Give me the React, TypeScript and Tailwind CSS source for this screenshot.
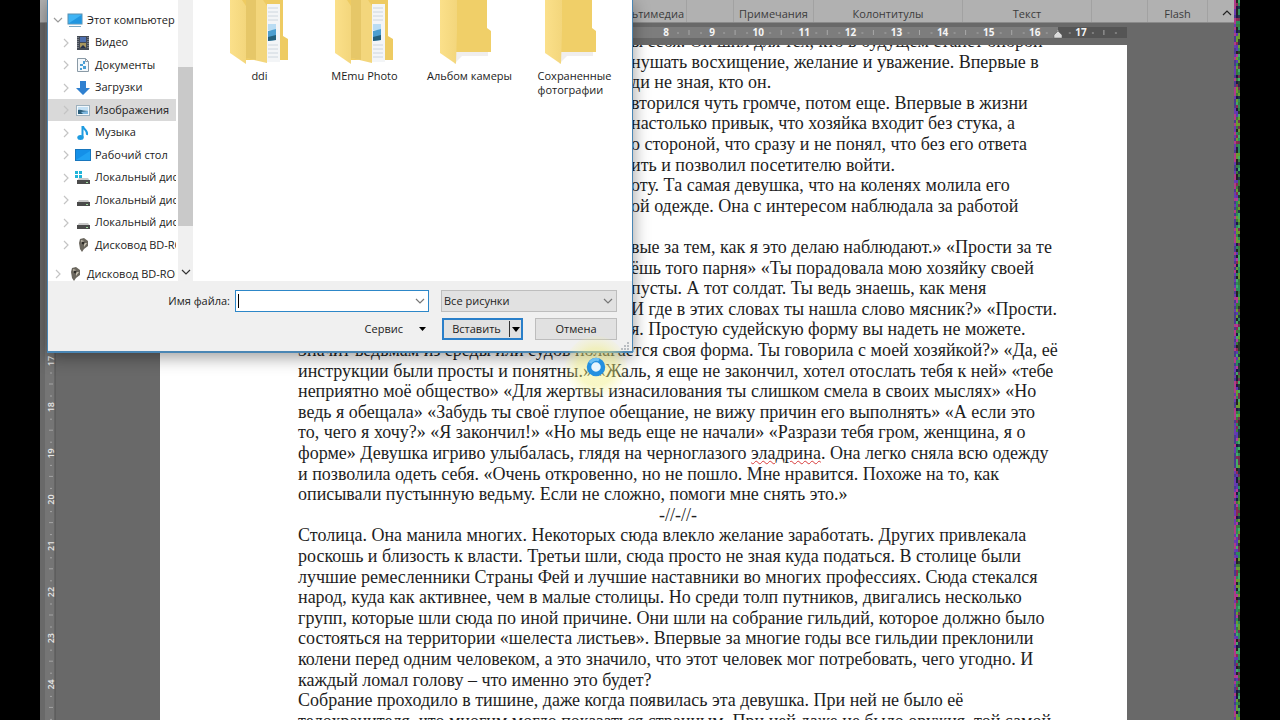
const tails = [
  'ы себя. Он шил для тех, кто в будущем станет опорой',
  'нушать восхищение, желание и уважение. Впервые в',
  'ди не зная, кто он.',
  'вторился чуть громче, потом еще. Впервые в жизни',
  'настолько привык, что хозяйка входит без стука, а',
  'о стороной, что сразу и не понял, что без его ответа',
  'ить и позволил посетителю войти.',
  'оту. Та самая девушка, что на коленях молила его',
  'ой одежде. Она с интересом наблюдала за работой',
  '',
  'вые за тем, как я это делаю наблюдают.» «Прости за те',
  'ёшь того парня» «Ты порадовала мою хозяйку своей',
  'пусты. А тот солдат. Ты ведь знаешь, как меня',
  'И где в этих словах ты нашла слово мясник?» «Прости.',
  'я. Простую судейскую форму вы надеть не можете.',
];

const lines = [
  'Значит ведьмам из среды или судов полагается своя форма. Ты говорила с моей хозяйкой?» «Да, её',
  'инструкции были просты и понятны.» «Жаль, я еще не закончил, хотел отослать тебя к ней» «тебе',
  'неприятно моё общество» «Для жертвы изнасилования ты слишком смела в своих мыслях» «Но',
  'ведь я обещала» «Забудь ты своё глупое обещание, не вижу причин его выполнять» «А если это',
  'то, чего я хочу?» «Я закончил!» «Но мы ведь еще не начали» «Разрази тебя гром, женщина, я о',
  'форме» Девушка игриво улыбалась, глядя на черноглазого *эладрина*. Она легко сняла всю одежду',
  'и позволила одеть себя. «Очень откровенно, но не пошло. Мне нравится. Похоже на то, как',
  'описывали пустынную ведьму. Если не сложно, помоги мне снять это.»',
  '-//-//-',
  'Столица. Она манила многих. Некоторых сюда влекло желание заработать. Других привлекала',
  'роскошь и близость к власти. Третьи шли, сюда просто не зная куда податься. В столице были',
  'лучшие ремесленники Страны Фей и лучшие наставники во многих профессиях. Сюда стекался',
  'народ, куда как активнее, чем в малые столицы. Но среди толп путников, двигались несколько',
  'групп, которые шли сюда по иной причине. Они шли на собрание гильдий, которое должно было',
  'состояться на территории «шелеста листьев». Впервые за многие годы все гильдии преклонили',
  'колени перед одним человеком, а это значило, что этот человек мог потребовать, чего угодно. И',
  'каждый ломал голову – что именно это будет?',
  'Собрание проходило в тишине, даже когда появилась эта девушка. При ней не было её',
  'телохранителя, что многим могло показаться странным. При ней даже не было оружия, той самой',
];

const Chevron = ({ className = '', d = 'M1 1l4 4 4-4' }) => (
  <svg className={`shrink-0 ${className}`} width="10" height="6" viewBox="0 0 10 6" fill="none" stroke="currentColor" strokeWidth="1.2">
    <path d={d} />
  </svg>
);

function TreeIcon({ kind }: { kind: string }) {
  return (
    <svg width="16" height="16" viewBox="0 0 16 16" className="shrink-0">
      {kind === 'pc' && (
        <>
          <rect x="1" y="2" width="14" height="10" fill="#3fb4f4" stroke="#5b8fb0" />
          <path d="M1.500 11.500L14.500 3v8.500z" fill="#2196e0" />
          <path d="M2 14.500h12" stroke="#7ba9c4" />
        </>
      )}
      {kind === 'video' && (
        <>
          <rect x="2" y="1" width="12" height="14" fill="#444a55" />
          <path d="M3 2v12M13 2v12" stroke="#a8adb5" strokeDasharray="1 1" />
          <rect x="5" y="2" width="6" height="5" fill="#4e6fb0" />
          <rect x="5" y="8" width="6" height="5" fill="#a6955e" />
          <path d="M5 13l3-3 3 3z" fill="#26314a" />
        </>
      )}
      {kind === 'docs' && (
        <>
          <path d="M2.500 1.500h8l3 3v10h-11z" fill="#f4f8fb" stroke="#8a9aa6" />
          <path d="M10.500 1.500v3h3" fill="none" stroke="#8a9aa6" />
          <path d="M8 4h2v3H8zM5 7h3v2H5zM8 9h3v3H8zM5 11h2v2H5z" fill="#4a9fd4" />
        </>
      )}
      {kind === 'down' && <path d="M5 1h6v7h4l-7 7-7-7h4z" fill="#2f80d0" />}
      {kind === 'pics' && (
        <>
          <rect x="1.500" y="3.500" width="13" height="10" fill="#f2f8fc" stroke="#9db0bd" />
          <path d="M3 5h10v4H3z" fill="#c3e0f4" />
          <path d="M3 8c3-1 5 1 10 1v3H3z" fill="#2c5f7c" />
          <path d="M6 10l7-1v3H8z" fill="#7fb8df" />
        </>
      )}
      {kind === 'music' && (
        <>
          <ellipse cx="5.500" cy="12.500" rx="3.200" ry="2.500" fill="#1e9be0" />
          <path d="M7.500 1v11.500M8 1c0 4 5 3.500 4 9" fill="none" stroke="#1e9be0" strokeWidth="2" />
        </>
      )}
      {kind === 'desk' && (
        <>
          <rect x="0.500" y="2.500" width="15" height="11" fill="#1490e8" stroke="#1876bd" />
          <path d="M1 13L15 4v9z" fill="#20a2f3" />
        </>
      )}
      {(kind === 'win' || kind === 'disk') && (
        <>
          <path d="M4 8h9l2 3H2z" fill="#c9c9c9" />
          <rect x="2" y="10" width="13" height="4" fill="#4b4b4b" />
          <path d="M11 12.500h2" stroke="#9fdc9f" />
        </>
      )}
      {kind === 'win' && <path d="M0 1h3v3H0zM4 1h3v3H4zM0 5h3v3H0zM4 5h3v3H4z" fill="#20b4d8" />}
      {kind === 'bd' && (
        <>
          <path d="M5 2l4-1 4 3v5l-4 3-2 3-2-3-1-6z" fill="#6b675e" />
          <path d="M6 3l3 1-2 4zM9 6l3 0-3 4z" fill="#c8c2b2" />
          <circle cx="8" cy="6" r="1.500" fill="#2e2c28" />
        </>
      )}
    </svg>
  );
}

const tree = [
  ['video', 'Видео'],
  ['docs', 'Документы'],
  ['down', 'Загрузки'],
  ['pics', 'Изображения'],
  ['music', 'Музыка'],
  ['desk', 'Рабочий стол'],
  ['win', 'Локальный диск'],
  ['disk', 'Локальный диск'],
  ['disk', 'Локальный диск'],
  ['bd', 'Дисковод BD-ROM'],
];

const folders = [
  { name: 'ddi', full: true },
  { name: 'MEmu Photo', full: true },
  { name: 'Альбом камеры', full: false },
  { name: 'Сохраненные\nфотографии', full: false },
];

function Folder({ full }: { full: boolean }) {
  return (
    <svg width="60" height="66" viewBox="0 0 60 66">
      <defs>
        <linearGradient id="flap" x1="0" x2="1">
          <stop offset="0" stopColor="#fbe08a" />
          <stop offset="1" stopColor="#f3d67c" />
        </linearGradient>
      </defs>
      {full ? (
        <>
          <path d="M10 0h43v36l5 3v21H10z" fill="#eecb62" />
          <path d="M37 4h13v58H37z" fill="#f3f5f7" />
          <path d="M38 8h10M38 12h10M38 16h10M38 20h10M38 45h10M38 49h10M38 53h10M38 57h10" stroke="#cdd6de" />
          <path d="M38 24h8v6h-8z" fill="#b9dcf3" />
          <path d="M38 31l8-2v11l-8 1z" fill="#4d9fd0" />
          <path d="M38 37l8-2v5l-8 1z" fill="#24607c" />
          <path d="M16 0h17l4 6v57l-21-5z" fill="#f3d67c" />
          <path d="M16 0h10v60l-10-2z" fill="#e6c768" />
          <path d="M0 0h12l4 6v58L0 53z" fill="url(#flap)" />
        </>
      ) : (
        <>
          <path d="M14 52v12l8-8h26v-4z" fill="#f0eeee" />
          <path d="M10 0h37v28l4 3v21H10z" fill="#f0cf68" />
          <path d="M0 0h17v30l-1 34L0 53z" fill="url(#flap)" />
        </>
      )}
    </svg>
  );
}

function Dialog() {
  return (
    <div
      role="dialog"
      aria-label="Вставить"
      className="absolute top-0 left-[47px] flex h-[353px] w-[586px] flex-col border-x border-b-2 border-[#4a86b4] bg-white font-['Open_Sans',sans-serif] text-[11px] text-[#1c1c1c] shadow-[0_4px_16px_rgba(0,0,0,0.4)]"
    >
      <div className="flex min-h-0 flex-1">
        <ul className="mr-0.5 w-32 overflow-hidden pt-[9px] whitespace-nowrap">
          <li className="flex h-[22px] items-center gap-1 pl-[5px]">
            <Chevron className="text-[#9a9a9a]" />
            <TreeIcon kind="pc" />
            <span>Этот компьютер</span>
          </li>
          {tree.map(([icon, label], i) => (
            <li
              key={i}
              className={`flex items-center gap-1 pl-[13px] odd:h-[22px] even:h-[23px] ${icon === 'pics' ? 'bg-[#d9d9d9]' : ''}`}
            >
              <Chevron className="-rotate-90 text-[#c4c4c4]" />
              <TreeIcon kind={icon} />
              <span>{label}</span>
            </li>
          ))}
          <li className="mt-[7px] flex h-[22px] items-center gap-1 pl-[5px]">
            <Chevron className="-rotate-90 text-[#c4c4c4]" />
            <TreeIcon kind="bd" />
            <span>Дисковод BD-ROM</span>
          </li>
        </ul>
        <div className="flex w-[15px] flex-col items-center bg-[#f0f0f0]">
          <div className="h-[67px]" />
          <div className="h-[159px] w-full bg-[#c9c9c9]" />
          <Chevron className="mt-auto mb-1.5 text-[#333]" />
        </div>
        <ul className="flex flex-1 pl-[14px]">
          {folders.map((f) => (
            <li key={f.name} className="flex w-[105px] flex-col items-center">
              <Folder full={f.full} />
              <span className="mt-[3px] leading-[14px] whitespace-pre-line">{f.name}</span>
            </li>
          ))}
        </ul>
      </div>

      <form className="flex h-[70px] flex-col gap-1.5 bg-[#f0f0f0] pt-[9px] pr-[15px]" onSubmit={(e) => e.preventDefault()}>
        <div className="flex items-center">
          <label htmlFor="file" className="w-[187px] pr-[5px] text-right">Имя файла:</label>
          <div className="relative flex-1">
            <input id="file" className="h-[22px] w-full border border-[#2d87c8] bg-white px-1 outline-none" />
            <span className="absolute top-1 left-[3px] h-[14px] w-px bg-black" />
            <Chevron className="absolute top-2 right-1 text-[#777]" />
          </div>
          <div className="relative ml-3 w-44">
            <select aria-label="Тип файлов" className="h-[22px] w-full appearance-none border border-[#bdbdbd] bg-[#e1e1e1] px-0.5">
              <option>Все рисунки</option>
            </select>
            <Chevron className="absolute top-2 right-1 text-[#777]" />
          </div>
        </div>
        <div className="flex justify-end">
          <button className="mr-4 flex h-[22px] items-center gap-4">
            Сервис
            <svg width="7" height="4" viewBox="0 0 7 4"><path d="M0 0h7L3.500 4z" /></svg>
          </button>
          <button className="flex h-[22px] w-[81px] items-center border-2 border-[#2a7fc9] bg-[#e1e1e1]">
            <span className="flex-1">Вставить</span>
            <span className="flex h-4 w-3 items-center justify-center border-l border-[#333]">
              <svg width="8" height="5" viewBox="0 0 8 5"><path d="M0 0h8L4 5z" /></svg>
            </span>
          </button>
          <button className="ml-3 h-[22px] w-[82px] border border-[#bdbdbd] bg-[#e1e1e1]">Отмена</button>
        </div>
      </form>
      <svg className="absolute right-0.5 bottom-0" width="9" height="9" viewBox="0 0 9 9" fill="#b9bdc2">
        <path d="M6 0h2v2H6zM3 3h2v2H3zM6 3h2v2H6zM0 6h2v2H0zM3 6h2v2H3zM6 6h2v2H6z" />
      </svg>
    </div>
  );
}

// deterministic coloured static along the right side of the recording
const noiseColors = ['#b03a9a', '#3a7a3a', '#5a3ab0', '#2c8a5a', '#1a1a40', '#6a9a30', '#8a2a50', '#222', '#44aa66'];
const greens = ['#3a7a3a', '#2c8a5a', '#6a9a30', '#2b3a2b', '#44aa66', '#703050', '#22304a'];
const noise = Array.from({ length: 720 }, (_, i) => {
  const col = i % 3;
  const n = Math.floor(Math.abs(Math.sin(i * 12.9898) * 43758.5453)) % 97;
  const color = col === 0 ? ['#b03a8a', '#6a3ab0', '#4a3a90'][n % 3] : col === 1 ? noiseColors[n % noiseColors.length] : greens[n % greens.length];
  return <rect key={i} x={col * 2} y={Math.floor(i / 3) * 3} width="2" height="3" fill={color} />;
});

const lineClass =
  'whitespace-pre h-[21px] leading-[21px] [&:nth-child(5n+2)]:h-[20px] [&:nth-child(5n+4)]:h-[20px]';

export default function App() {
  return (
    <div className="relative flex h-screen overflow-hidden bg-black px-10">
      <main className="flex min-w-0 flex-1 flex-col bg-[#696969]">
        <header className="flex h-[23px] shrink-0 justify-end border-b border-[#8a8a8a] bg-[#b1b1b1] font-['Open_Sans',sans-serif] text-[11px] leading-[27px] text-[#3c3c3c]">
          <span className="w-[80px] border-r border-[#a2a2a2] pr-0.5 text-right">Мультимедиа</span>
          <span className="w-[47px] border-r border-[#a2a2a2]" />
          <span className="w-20 border-r border-[#a2a2a2] text-center">Примечания</span>
          <span className="w-[149px] border-r border-[#a2a2a2] text-center">Колонтитулы</span>
          <span className="w-[129px] border-r border-[#a2a2a2] text-center">Текст</span>
          <span className="w-14 border-r border-[#a2a2a2]" />
          <span className="w-[60px] border-r border-[#a2a2a2] text-center">Flash</span>
          <button aria-label="Свернуть ленту" className="flex w-[26px] items-center justify-end pt-1 pr-0.5">
            <Chevron className="text-[#222]" d="M1 5l4-4 4 4" />
          </button>
        </header>

        <div className="flex min-h-0 flex-1">
          <svg width="15" height="697" viewBox="0 0 15 697" className="shrink-0 overflow-visible">
            <rect x="5" width="10" height="697" fill="#757575" />
            <path d="M15 0v697" stroke="#555" />
            {[17, 18, 19, 20, 21, 22, 23, 24].map((n, i) => (
              <g key={n} transform={`translate(0 ${338 + i * 46.2})`}>
                <text
                  transform="translate(14 0) rotate(-90)"
                  textAnchor="middle"
                  fill="#e6e6e6"
                  className="font-['Open_Sans',sans-serif] text-[9px] font-semibold"
                >
                  {n}
                </text>
                <path d="M10 12h2M9 23h4M10 35h2" stroke="#a4a4a4" />
              </g>
            ))}
          </svg>

          <div className="mr-[107px] ml-[105px] flex min-w-0 flex-1 flex-col">
            <svg height="22" className="w-full shrink-0">
              <rect y="4" width="100%" height="11" fill="#7d7d7d" />
              <rect x="898" y="4" width="100" height="11" fill="#555" />
              {[8, 9, 10, 11, 12, 13, 14, 15, 16, 17].map((n, i) => (
                <g key={n} transform={`translate(${506 + i * 46.100} 0)`}>
                  <text y="13" textAnchor="middle" fill="#f4f4f4" className="font-['Open_Sans',sans-serif] text-[10px] font-bold">
                    {n}
                  </text>
                  <path d="M11 10h2M23 7v5M34 10h2" stroke="#a8a8a8" />
                </g>
              ))}
              <path d="M894 15v-3l4-4 4 4v3z" fill="#dcdcdc" stroke="#555" strokeWidth="0.500" />
            </svg>
            <article className="min-h-0 flex-1 overflow-hidden bg-white pl-[138px] font-['Liberation_Serif',serif] text-[18px] text-[#1e1e1e]">
              <div className="-mt-3.5">
                {tails.map((line, i) => (
                  <p key={i} className={`${lineClass} pl-[333px]`}>{line}</p>
                ))}
                {lines.map((line) => {
                  const [before, wrong, after] = line.split('*');
                  return (
                    <p key={line} className={`${lineClass} ${line === '-//-//-' ? 'pl-[361px]' : ''}`}>
                      {before}
                      {wrong && (
                        <span className="underline decoration-[#d83b3b] decoration-wavy decoration-1 underline-offset-1">{wrong}</span>
                      )}
                      {after}
                    </p>
                  );
                })}
              </div>
            </article>
          </div>
        </div>
      </main>
      <svg width="6" height="720" viewBox="0 0 6 720" className="shrink-0">{noise}</svg>

      <Dialog />

      <svg className="absolute top-[335px] left-[564px]" width="64" height="64" viewBox="0 0 64 64">
        <defs>
          <radialGradient id="halo">
            <stop offset="0.6" stopColor="#f0ee80" stopOpacity="0.45" />
            <stop offset="1" stopColor="#f6f4a0" stopOpacity="0.1" />
          </radialGradient>
        </defs>
        <circle cx="32" cy="32" r="31" fill="url(#halo)" />
        <circle cx="32" cy="32" r="7" fill="#e8f5fd" stroke="#2490e0" strokeWidth="4.500" />
        <path d="M26 28a7 7 0 0 1 9-3" fill="none" stroke="#6cc0f5" strokeWidth="3" />
      </svg>
    </div>
  );
}
